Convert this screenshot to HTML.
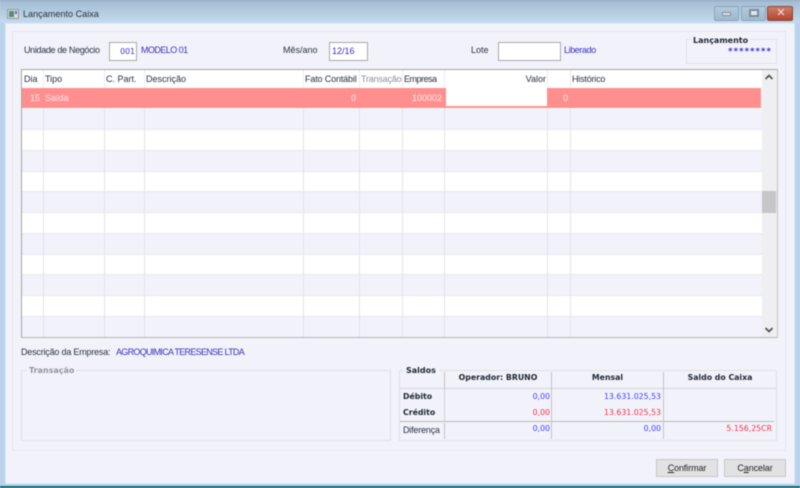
<!DOCTYPE html>
<html><head><meta charset="utf-8">
<style>
html,body{margin:0;padding:0;width:800px;height:488px;overflow:hidden;background:#b9d3ec}
#w{position:relative;width:800px;height:488px;overflow:hidden;font-family:"Liberation Sans",sans-serif;font-size:9px;color:#2a3040;filter:blur(.45px)}
#w div{position:absolute;white-space:nowrap;box-sizing:border-box}
.b{color:#3a2fc0}.r{text-align:right}.c{text-align:center}
.v{top:88px;width:1px;height:249px;background:#e3e4ea}
.g{font-family:"DejaVu Sans",sans-serif;font-weight:bold;color:#1e2430;font-size:7.8px}
.n{font-family:"DejaVu Sans",sans-serif;font-size:7.8px}
.inp{background:#fff;border:1px solid #a9a9ab;height:19px;line-height:17px}
.pk{top:88px;height:20px;line-height:20px;color:#fde8e8}
.sv{width:1px;background:#c2c2c6}
.btn{background:#e2e2e4;border:1px solid #c6c6c8;height:18px;line-height:17px;text-align:center;width:62px;top:459px;color:#222;letter-spacing:-.1px}
</style></head><body>
<div id="w">
<div style="left:0;top:0;width:800px;height:23px;background:linear-gradient(#a3bcd3,#c4dbed)"></div>
<div style="left:0;top:0;width:800px;height:1px;background:#8ea4b8"></div>
<div style="left:0;top:23px;width:6px;height:465px;background:#b9d3ec"></div>
<div style="left:794px;top:23px;width:6px;height:465px;background:#b9d3ec"></div>
<div style="left:0;top:483px;width:800px;height:3px;background:#b9d3ec"></div>
<div style="left:0;top:486px;width:800px;height:2px;background:#0f6b74"></div>
<div style="left:5px;top:23px;width:790px;height:461px;background:#f2f3fa;border:1px solid #dbe9f7"></div>

<!-- title -->
<div style="left:7px;top:9px;width:12px;height:10px;background:#d8dde2;border:1px solid #8f9aa4"></div>
<div style="left:9px;top:11px;width:5px;height:6px;background:#4f8f78"></div>
<div style="left:15px;top:11px;width:2px;height:3px;background:#5a6fa8"></div>
<div style="left:23px;top:8px;font-size:9.1px;line-height:13px;color:#26303c">Lançamento Caixa</div>
<div style="left:714px;top:6px;width:25px;height:15px;border:1px solid #8ba5bb;border-radius:2px;background:linear-gradient(#b4c9dc,#9fb9cf)"></div>
<div style="left:722px;top:12px;width:9px;height:4px;background:#dfe6ec;border:1px solid #7f92a3"></div>
<div style="left:741px;top:6px;width:25px;height:15px;border:1px solid #8ba5bb;border-radius:2px;background:linear-gradient(#b4c9dc,#9fb9cf)"></div>
<div style="left:749px;top:9px;width:10px;height:8px;background:#dfe6ec;border:2px solid #7b8d9d"></div>
<div style="left:767px;top:6px;width:26px;height:15px;border:1px solid #86483c;border-radius:2px;background:linear-gradient(#cf7d6a,#b6452f)"></div>
<div style="left:775px;top:5px;width:12px;height:15px;line-height:16px;text-align:center;font-size:11px;font-weight:bold;color:#ece3e0;font-family:'DejaVu Sans',sans-serif">✕</div>

<!-- panel -->
<div style="left:12px;top:31px;width:774px;height:420px;border:1px solid #e5e5ea"></div>

<div style="left:24px;top:45px;line-height:11px;letter-spacing:-.33px">Unidade de Negócio</div>
<div class="inp r b n" style="left:109px;top:42px;width:28px;padding-right:1px">001</div>
<div class="b" style="left:141px;top:45px;line-height:11px;letter-spacing:-.55px">MODELO 01</div>
<div style="left:283px;top:45px;line-height:11px">Mês/ano</div>
<div class="inp b" style="left:329px;top:42px;width:39px;padding-left:2px">12/16</div>
<div style="left:471px;top:45px;line-height:11px">Lote</div>
<div class="inp" style="left:498px;top:42px;width:63px"></div>
<div class="b" style="left:564px;top:45px;line-height:11px;letter-spacing:-.4px">Liberado</div>

<div style="left:686px;top:39px;width:91px;height:25px;border:1px solid #e1e2e8"></div>
<div class="g" style="left:692px;top:35px;line-height:11px;background:#f2f3fa;padding:0 2px 0 1px;font-size:8px">Lançamento</div>
<div class="b r" style="left:700px;top:46px;width:72px;line-height:11px;letter-spacing:1.1px;font-weight:bold;font-family:'DejaVu Sans',sans-serif;font-size:8.4px">********</div>

<!-- grid -->
<div style="left:21px;top:69px;width:757px;height:269px;border:1px solid #a4a5a8;border-right-color:#c0c1c5;border-bottom-color:#b4b5b8;background:#fff"></div>
<div style="left:22px;top:109px;width:740px;height:20px;background:#f1f2fa"></div>
<div style="left:22px;top:150px;width:740px;height:21px;background:#f1f2fa"></div>
<div style="left:22px;top:191px;width:740px;height:21px;background:#f1f2fa"></div>
<div style="left:22px;top:233px;width:740px;height:21px;background:#f1f2fa"></div>
<div style="left:22px;top:274px;width:740px;height:21px;background:#f1f2fa"></div>
<div style="left:22px;top:316px;width:740px;height:21px;background:#f1f2fa"></div>
<div style="left:22px;top:129px;width:740px;height:1px;background:#e8e9ee"></div>
<div style="left:22px;top:150px;width:740px;height:1px;background:#e8e9ee"></div>
<div style="left:22px;top:171px;width:740px;height:1px;background:#e8e9ee"></div>
<div style="left:22px;top:191px;width:740px;height:1px;background:#e8e9ee"></div>
<div style="left:22px;top:212px;width:740px;height:1px;background:#e8e9ee"></div>
<div style="left:22px;top:233px;width:740px;height:1px;background:#e8e9ee"></div>
<div style="left:22px;top:254px;width:740px;height:1px;background:#e8e9ee"></div>
<div style="left:22px;top:274px;width:740px;height:1px;background:#e8e9ee"></div>
<div style="left:22px;top:295px;width:740px;height:1px;background:#e8e9ee"></div>
<div style="left:22px;top:316px;width:740px;height:1px;background:#e8e9ee"></div>

<div class="v" style="left:43px"></div><div class="v" style="left:104px"></div><div class="v" style="left:144px"></div><div class="v" style="left:303px"></div><div class="v" style="left:359px"></div><div class="v" style="left:402px"></div><div class="v" style="left:444px"></div><div class="v" style="left:547px"></div><div class="v" style="left:570px"></div>
<div style="left:43px;top:70px;width:1px;height:18px;background:#ececf0"></div>
<div style="left:104px;top:70px;width:1px;height:18px;background:#ececf0"></div>
<div style="left:144px;top:70px;width:1px;height:18px;background:#ececf0"></div>
<div style="left:303px;top:70px;width:1px;height:18px;background:#ececf0"></div>
<div style="left:359px;top:70px;width:1px;height:18px;background:#ececf0"></div>
<div style="left:402px;top:70px;width:1px;height:18px;background:#ececf0"></div>
<div style="left:444px;top:70px;width:1px;height:18px;background:#ececf0"></div>
<div style="left:547px;top:70px;width:1px;height:18px;background:#ececf0"></div>
<div style="left:570px;top:70px;width:1px;height:18px;background:#ececf0"></div>

<div style="left:24px;top:74px;line-height:11px">Dia</div>
<div style="left:45px;top:74px;line-height:11px">Tipo</div>
<div style="left:106px;top:74px;line-height:11px">C. Part.</div>
<div style="left:146px;top:74px;line-height:11px">Descrição</div>
<div style="left:305px;top:74px;line-height:11px;letter-spacing:-.15px">Fato Contábil</div>
<div style="left:361px;top:74px;line-height:11px;color:#8f9096;letter-spacing:-.2px">Transação</div>
<div style="left:404px;top:74px;line-height:11px;letter-spacing:-.5px">Empresa</div>
<div class="r" style="left:480px;top:74px;width:66px;line-height:11px">Valor</div>
<div style="left:572px;top:74px;line-height:11px;letter-spacing:-.2px">Histórico</div>

<div style="left:22px;top:88px;width:739px;height:20px;background:#ff8f8f"></div>
<div style="left:446px;top:88px;width:101px;height:18px;background:#fff"></div>
<div class="pk r" style="left:22px;width:18px">15</div>
<div class="pk" style="left:45px">Saída</div>
<div class="pk r" style="left:320px;width:36px">0</div>
<div class="pk r" style="left:404px;width:38px">100002</div>
<div class="pk r" style="left:550px;width:18px">0</div>

<!-- scrollbar -->
<div style="left:762px;top:70px;width:15px;height:267px;background:#efeff1"></div>
<div style="left:762px;top:191px;width:14px;height:22px;background:#c6c6c8"></div>
<svg style="position:absolute;left:764px;top:73px" width="10" height="8"><path d="M1.500 6 L5 2.500 L8.500 6" fill="none" stroke="#55555a" stroke-width="1.8"/></svg>
<svg style="position:absolute;left:764px;top:326px" width="10" height="8"><path d="M1.500 2 L5 5.500 L8.500 2" fill="none" stroke="#55555a" stroke-width="1.8"/></svg>

<div style="left:21px;top:347px;line-height:11px;letter-spacing:-.2px">Descrição da Empresa:</div>
<div class="b" style="left:116px;top:347px;line-height:11px;letter-spacing:-.7px">AGROQUIMICA TERESENSE LTDA</div>

<!-- transacao -->
<div style="left:21px;top:370px;width:370px;height:71px;border:1px solid #e0e1e6"></div>
<div class="g" style="left:27px;top:365px;line-height:11px;background:#f2f3fa;padding:0 2px;color:#93949a;font-size:8px">Transação</div>

<!-- saldos -->
<div style="left:399px;top:370px;width:378px;height:71px;border:1px solid #e0e1e6"></div>
<div style="left:400px;top:388px;width:376px;height:1px;background:#d4d4d8"></div>
<div style="left:400px;top:421px;width:374px;height:1px;background:#b8b8bc"></div>
<div class="sv" style="left:444px;top:372px;height:17px"></div>
<div class="sv" style="left:444px;top:389px;height:32px;background:#d2d2d6"></div>
<div class="sv" style="left:444px;top:423px;height:16px"></div>
<div class="sv" style="left:551px;top:372px;height:67px"></div>
<div class="sv" style="left:663px;top:372px;height:67px"></div>
<div class="g" style="left:404px;top:365px;line-height:11px;background:#f2f3fa;padding:0 3px 0 2px;font-size:8px">Saldos</div>
<div class="g c" style="left:445px;top:372px;width:106px;line-height:11px">Operador: BRUNO</div>
<div class="g c" style="left:552px;top:372px;width:111px;line-height:11px">Mensal</div>
<div class="g c" style="left:664px;top:372px;width:112px;line-height:11px">Saldo do Caixa</div>
<div class="g" style="left:403px;top:391px;line-height:11px">Débito</div>
<div class="g" style="left:403px;top:407px;line-height:11px">Crédito</div>
<div style="left:403px;top:425px;line-height:11px;letter-spacing:-.2px">Diferença</div>
<div class="r n" style="left:470px;top:391px;width:80px;line-height:11px;color:#4040ff">0,00</div>
<div class="r n" style="left:560px;top:391px;width:101px;line-height:11px;color:#4040ff">13.631.025,53</div>
<div class="r n" style="left:470px;top:407px;width:80px;line-height:11px;color:#f5304a">0,00</div>
<div class="r n" style="left:560px;top:407px;width:101px;line-height:11px;color:#f5304a">13.631.025,53</div>
<div class="r n" style="left:470px;top:423px;width:80px;line-height:11px;color:#4040ff">0,00</div>
<div class="r n" style="left:560px;top:423px;width:101px;line-height:11px;color:#4040ff">0,00</div>
<div class="r n" style="left:680px;top:423px;width:92px;line-height:11px;color:#f5304a">5.156,25CR</div>

<!-- buttons -->
<div class="btn" style="left:656px"><span style="text-decoration:underline">C</span>onfirmar</div>
<div class="btn" style="left:724px">C<span style="text-decoration:underline">a</span>ncelar</div>
</div>
</body></html>
